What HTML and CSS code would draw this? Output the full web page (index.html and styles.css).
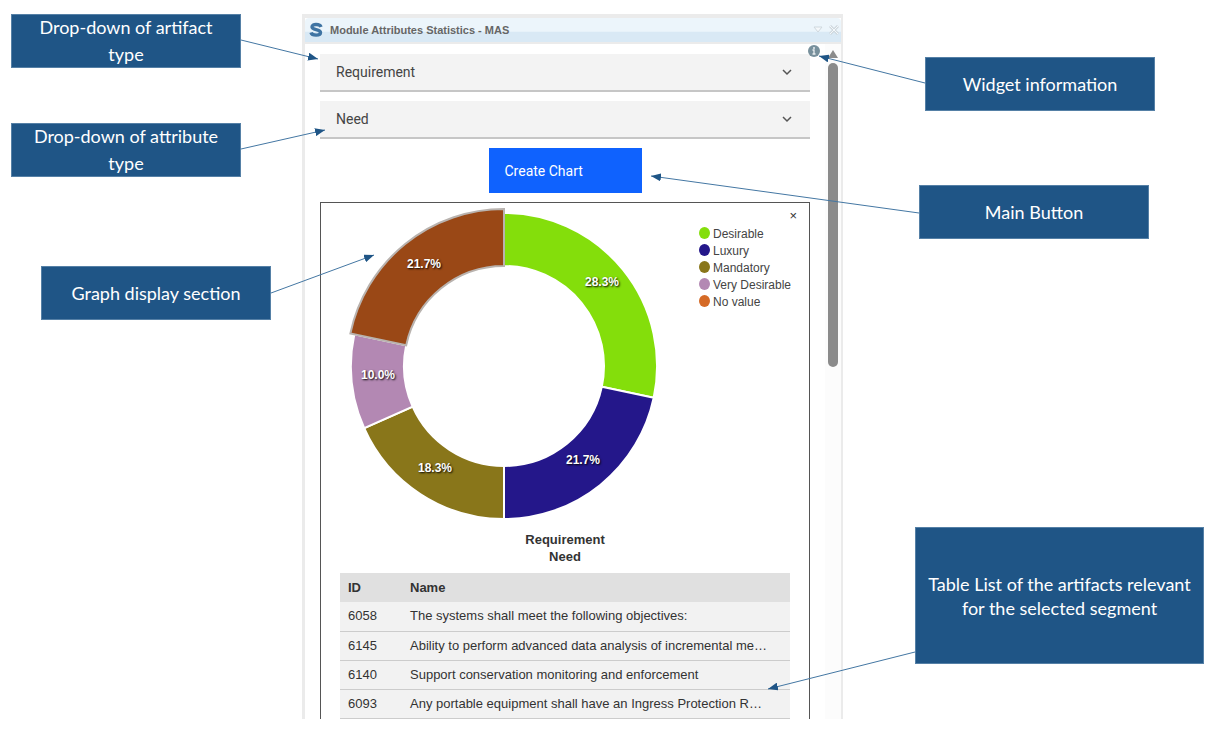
FILE: index.html
```html
<!DOCTYPE html>
<html lang="en">
<head>
  <meta charset="utf-8">
  <title>Module Attributes Statistics - MAS</title>
  <link rel="stylesheet" href="styles.css">
</head>
<body>
  <main class="board">

    <!-- Widget -->
    <section class="widget">
      <header class="widget-header">
        <svg class="logo" viewBox="0 0 16 16" width="16" height="16">
          <path d="M13 5C12 2 4 1.500 4 5c0 3.300 8.500 1.800 8.500 5.500 0 3.500-8.500 3.500-9.500 0" fill="none" stroke="#3f74a3" stroke-width="3.4"/>
        </svg>
        <h1>Module Attributes Statistics - MAS</h1>
        <button class="tool" aria-label="Menu">
          <svg viewBox="0 0 10 10" width="10" height="10"><path d="M1 2h8L5 7z" fill="#f4f8fb" stroke="#cfd8de"/></svg>
        </button>
        <button class="tool" aria-label="Close widget">
          <svg viewBox="0 0 10 10" width="10" height="10"><path d="M1 1l8 8M9 1l-8 8" stroke="#cfd8de" stroke-width="3"/><path d="M1 1l8 8M9 1l-8 8" stroke="#f4f8fb"/></svg>
        </button>
      </header>

      <div class="widget-body">
        <div class="content">
          <div class="dropdown">
            <select aria-label="Artifact type"><option>Requirement</option></select>
            <svg class="chevron" viewBox="0 0 12 8" width="12" height="8"><path d="M2 1l4 4 4-4" fill="none" stroke="#555" stroke-width="1.5"/></svg>
          </div>
          <div class="dropdown">
            <select aria-label="Attribute type"><option>Need</option></select>
            <svg class="chevron" viewBox="0 0 12 8" width="12" height="8"><path d="M2 1l4 4 4-4" fill="none" stroke="#555" stroke-width="1.5"/></svg>
          </div>
          <button class="create">Create Chart</button>

          <div class="card">
            <button class="close" aria-label="Close chart">×</button>
            <div class="chart">
              <svg class="donut" viewBox="-160 -163 320 320" width="320" height="320">
                <g stroke="#fff" stroke-width="2">
                  <path fill="#84de0b" d="M0-153A153 153 0 0 1 149.7 31.8L97.8 20.8A100 100 0 0 0 0-100z"/>
                  <path fill="#24178a" d="M149.7 31.8A153 153 0 0 1 0 153V100A100 100 0 0 0 97.8 20.8z"/>
                  <path fill="#89761a" d="M0 153A153 153 0 0 1-139.8 62.2L-91.4 40.7A100 100 0 0 0 0 100z"/>
                  <path fill="#b388b3" d="M-139.8 62.2A153 153 0 0 1-149.7-31.8L-97.8-20.8A100 100 0 0 0-91.4 40.7z"/>
                </g>
                <path class="selected" d="M-153.6-32.6A157 157 0 0 1 0-157V-100A100 100 0 0 0-97.8-20.8z"/>
                <g class="percent">
                  <text x="98" y="-80">28.3%</text>
                  <text x="79" y="98">21.7%</text>
                  <text x="-69" y="106">18.3%</text>
                  <text x="-126" y="13">10.0%</text>
                  <text x="-80" y="-98">21.7%</text>
                </g>
              </svg>
              <ul class="legend">
                <li><span class="dot desirable"></span>Desirable</li>
                <li><span class="dot luxury"></span>Luxury</li>
                <li><span class="dot mandatory"></span>Mandatory</li>
                <li><span class="dot very"></span>Very Desirable</li>
                <li><span class="dot none"></span>No value</li>
              </ul>
            </div>

            <h2>Requirement<br>Need</h2>

            <table>
              <thead>
                <tr><th class="id">ID</th><th>Name</th></tr>
              </thead>
              <tbody>
                <tr><td>6058</td><td>The systems shall meet the following objectives:</td></tr>
                <tr><td>6145</td><td>Ability to perform advanced data analysis of incremental me…</td></tr>
                <tr><td>6140</td><td>Support conservation monitoring and enforcement</td></tr>
                <tr><td>6093</td><td>Any portable equipment shall have an Ingress Protection R…</td></tr>
              </tbody>
            </table>
          </div>
        </div>

        <button class="info" aria-label="Widget information">
          <svg viewBox="0 0 12 12" width="12" height="12"><circle cx="6" cy="6" r="6" fill="#78909c"/><path d="M4.5 5H6v4M4.5 9h3" fill="none" stroke="#e8edf0" stroke-width="1.3"/><circle cx="6" cy="3" r="1" fill="#e8edf0"/></svg>
        </button>
        <div class="scrollbar">
          <svg viewBox="0 0 10 8" width="10" height="8"><path d="M5 0l5 8H0z" fill="#8b8b8b"/></svg>
          <div class="thumb"></div>
        </div>
      </div>
    </section>

    <!-- Arrows, one layer for each side -->
    <svg class="arrows arrows-left" width="400" height="733">
      <defs>
        <marker id="head" viewBox="0 0 10 8" refX="10" refY="4" markerWidth="10" markerHeight="8" markerUnits="userSpaceOnUse" orient="auto">
          <path d="M0 0l10 4-10 4z" fill="#1f5586"/>
        </marker>
      </defs>
      <path class="tip" d="M241 40L318 59"/>
      <path class="tip" d="M241 149L325 130"/>
      <path class="tip" d="M271 293L374 255"/>
    </svg>
    <svg class="arrows arrows-right" width="587" height="733">
      <path class="tip" d="M285 83L179 56"/>
      <path class="tip" d="M279 213L11 176"/>
      <path class="tip" d="M275 652L128 689"/>
    </svg>

    <!-- Callouts -->
    <div class="callout artifact">Drop-down of artifact type</div>
    <div class="callout attribute">Drop-down of attribute type</div>
    <div class="callout graph">Graph display section</div>
    <div class="callout information">Widget information</div>
    <div class="callout main-button">Main Button</div>
    <div class="callout list">Table List of the artifacts relevant for the selected segment</div>
  </main>
</body>
</html>
```

FILE: styles.css
```css
* {
    box-sizing: border-box;
}

body {
    margin: 0;
    background-color: #fff;
    font-family: "Liberation Sans", Arial, sans-serif;
    color: #333;
}

button {
    padding: 0;
    border: 0;
    background: none;
    cursor: pointer;
    font-family: inherit;
}

svg {
    display: block;
}

.board {
    position: relative;
    min-width: 1227px;
    padding: 14px 384px 14px 302px;
}

/* widget */
.widget {
    border: 3px solid #ebebeb;
    border-width: 4px 2px 0 3px;
}

.widget-header {
    display: flex;
    align-items: center;
    gap: 6px;
    height: 24px;
    padding: 0 2px 0 3px;
    background: linear-gradient(#ecf5fb 55%, #d9e9f5 60%);
    border-radius: 4px 4px 0 0;
}

.widget-header h1 {
    flex: 1;
    margin: 0;
    font-size: 11px;
    line-height: 16px;
    color: #666;
}

.widget-body {
    position: relative;
    display: flex;
    border-top: 2px solid #ebebeb;
}

.content {
    flex: 1;
    min-width: 0;
    padding: 10px 15px 0 15px;
}

.dropdown {
    position: relative;
    margin-bottom: 9px;
}

.dropdown select {
    display: block;
    width: 100%;
    height: 38px;
    padding: 0 16px;
    border: 0;
    border-bottom: 2px solid #c6c6c6;
    border-radius: 0;
    background-color: #f3f3f3;
    color: #444;
    font-family: Roboto, sans-serif;
    font-size: 14px;
    appearance: none;
}

.chevron {
    position: absolute;
    top: 15px;
    right: 17px;
    pointer-events: none;
}

.create {
    display: block;
    width: 153px;
    height: 45px;
    margin: 0 auto 9px;
    padding-left: 16px;
    background-color: #0f62fe;
    color: #fff;
    font-family: Roboto, sans-serif;
    font-size: 14px;
    text-align: left;
}

.info {
    position: absolute;
    top: 1px;
    right: 21px;
}

.scrollbar {
    display: flex;
    flex-direction: column;
    align-items: center;
    width: 16px;
    padding-top: 6px;
    background-color: #fcfcfc;
}

.thumb {
    width: 10px;
    height: 304px;
    margin-top: 5px;
    border-radius: 5px;
    background-color: #8b8b8b;
}

/* chart card */
.card {
    position: relative;
    padding: 0 19px;
    border: 1px solid #555;
    border-bottom: 0;
}

.close {
    position: absolute;
    top: 6px;
    right: 12px;
    font-size: 13px;
    line-height: 14px;
    color: #333;
}

.chart {
    display: flex;
    padding-left: 4px;
}

.donut {
    flex-shrink: 0;
}

.selected {
    fill: #9a4816;
    stroke: #b9b3af;
    stroke-width: 2;
}

.percent {
    fill: #fff;
    font-size: 12px;
    font-weight: bold;
    text-anchor: middle;
    text-shadow: 1px 1px 2px #000;
}

.legend {
    margin: 23px 0 0 35px;
    padding: 0;
    list-style: none;
    font-size: 12px;
    line-height: 17px;
    white-space: nowrap;
    color: #444;
}

.legend li {
    display: flex;
    gap: 3px;
}

.dot {
    flex-shrink: 0;
    width: 11px;
    height: 12px;
    margin-top: 1px;
    border-radius: 50%;
}

.desirable { background-color: #84de0b; }
.luxury { background-color: #24178a; }
.mandatory { background-color: #89761a; }
.very { background-color: #b388b3; }
.none { background-color: #d56a26; }

h2 {
    margin: 8px 0;
    font-size: 13px;
    line-height: 17px;
    text-align: center;
}

table {
    width: 100%;
    border-collapse: collapse;
    table-layout: fixed;
    font-size: 13px;
    line-height: 16px;
    text-align: left;
}

th, td {
    height: 29px;
    padding: 0 8px;
    overflow: hidden;
    white-space: nowrap;
}

th {
    background-color: #e0e0e0;
}

td {
    background-color: #f2f2f2;
    border-bottom: 1px solid #ccc;
}

.id {
    width: 62px;
}

/* arrows and callouts over the widget */
.arrows {
    position: absolute;
    top: 0;
    fill: none;
    stroke: #4477a3;
    pointer-events: none;
}

.arrows marker {
    stroke: none;
}

.arrows-left {
    left: 0;
}

.arrows-right {
    right: 0;
}

.tip {
    marker-end: url(#head);
}

.callout {
    position: absolute;
    display: flex;
    align-items: center;
    justify-content: center;
    width: 230px;
    height: 54px;
    padding: 0 16px;
    border: 1px solid #5580a6;
    background-color: #1f5586;
    color: #fff;
    font-family: Lato, sans-serif;
    font-size: 18px;
    line-height: 27px;
    text-align: center;
}

.artifact {
    top: 14px;
    left: 11px;
}

.attribute {
    top: 123px;
    left: 11px;
}

.graph {
    top: 266px;
    left: 41px;
}

.information {
    top: 57px;
    right: 72px;
}

.main-button {
    top: 185px;
    right: 78px;
}

.list {
    top: 527px;
    right: 23px;
    width: 289px;
    height: 137px;
    padding: 0 8px;
    line-height: 24px;
}
```
